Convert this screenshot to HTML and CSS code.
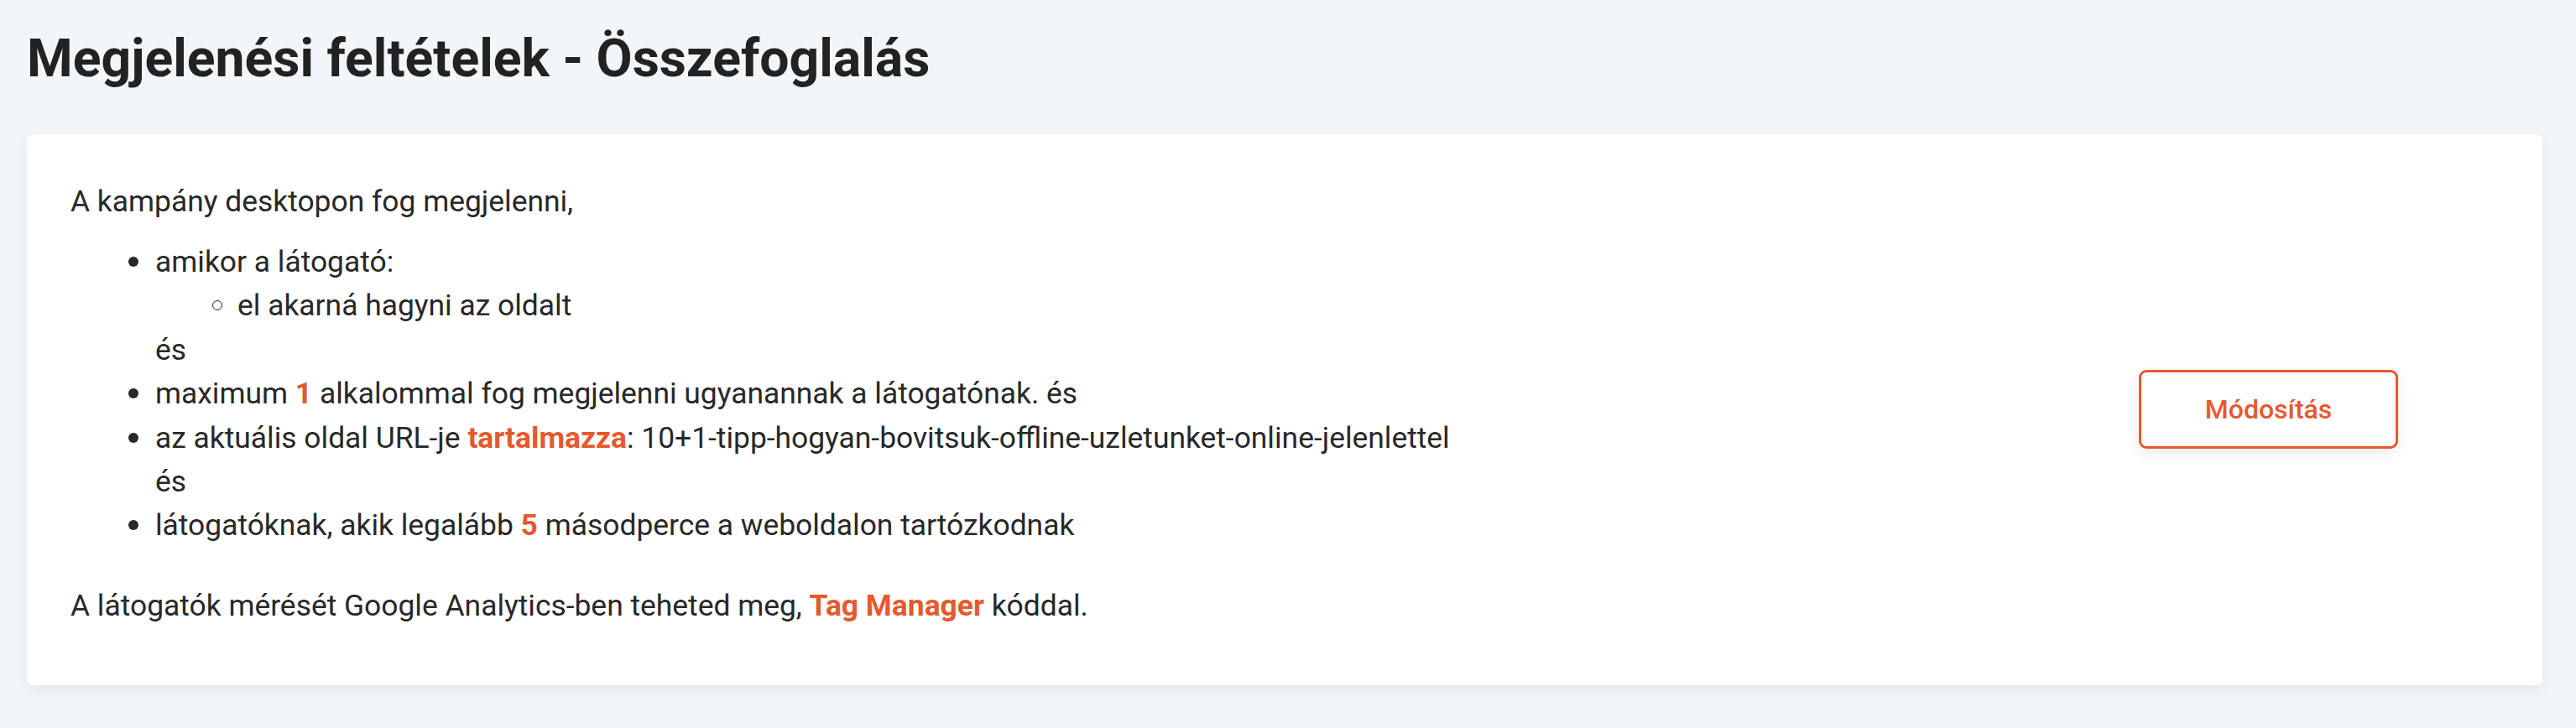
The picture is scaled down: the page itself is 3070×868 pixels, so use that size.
FILE: index.html
```html
<!DOCTYPE html>
<html lang="hu">
<head>
<meta charset="utf-8">
<title>Megjelenési feltételek - Összefoglalás</title>
<link rel="stylesheet" href="styles.css">
</head>
<body>
<div class="page">
  <h1 class="title">Megjelenési feltételek - Összefoglalás</h1>
  <section class="card">
    <div class="summary">
      <p class="lead">A kampány desktopon fog megjelenni,</p>
      <ul class="conditions">
        <li>amikor a látogató:
          <ul class="sub">
            <li>el akarná hagyni az oldalt</li>
          </ul>
          <div class="and">és</div>
        </li>
        <li>maximum <strong class="hl">1</strong> alkalommal fog megjelenni ugyanannak a látogatónak. és</li>
        <li>az aktuális oldal URL-je <strong class="hl">tartalmazza</strong>: 10+1-tipp-hogyan-bovitsuk-offline-uzletunket-online-jelenlettel
          <div class="and">és</div>
        </li>
        <li>látogatóknak, akik legalább <strong class="hl">5</strong> másodperce a weboldalon tartózkodnak</li>
      </ul>
      <p class="note">A látogatók mérését Google Analytics-ben teheted meg, <strong class="hl">Tag Manager</strong> kóddal.</p>
    </div>
    <button class="edit-btn" type="button">Módosítás</button>
  </section>
</div>
</body>
</html>
```

FILE: styles.css
```css
html, body {
  margin: 0;
  padding: 0;
  background: #f3f6f9;
}

body {
  font-family: Roboto, "Liberation Sans", Arial, sans-serif;
  color: #282828;
}

.page {
  padding: 32px 40px 40px 32px;
}

.title {
  margin: 0 0 53px 0;
  font-size: 62.5px;
  font-weight: 700;
  line-height: 75px;
  color: #222222;
}

.card {
  display: flex;
  align-items: center;
  background: #ffffff;
  border-radius: 8px;
  box-shadow: 0 5px 16px rgba(30, 45, 70, 0.07);
  padding: 54px 52px 54px 52px;
}

.summary {
  flex: 1;
  font-size: 35.4px;
  line-height: 52.4px;
}

.lead {
  margin: 0;
}

.note {
  margin: 0 0 14px 0;
}

.conditions {
  margin: 19.6px 0 43.6px 0;
  padding-left: 101px;
  list-style: none;
}

.conditions > li::before {
  content: "";
  display: inline-block;
  width: 12px;
  height: 12px;
  margin: 0 20px 0 -32px;
  border-radius: 50%;
  background: #282828;
  vertical-align: 6px;
}

.sub {
  margin: 0;
  padding-left: 98px;
  list-style: none;
}

.sub > li::before {
  content: "";
  display: inline-block;
  box-sizing: border-box;
  width: 12px;
  height: 12px;
  margin: 0 18px 0 -30px;
  border-radius: 50%;
  border: 1.5px solid #282828;
  vertical-align: 6px;
}

.hl {
  color: #e45a2e;
  font-weight: 700;
}

.edit-btn {
  flex: none;
  width: 309px;
  height: 94px;
  margin-right: 120px;
  background: #ffffff;
  border: 3px solid #e45a2e;
  border-radius: 9px;
  color: #e45a2e;
  font-family: Roboto, "Liberation Sans", Arial, sans-serif;
  font-size: 32px;
  font-weight: 500;
  box-shadow: 0 6px 18px rgba(30, 40, 60, 0.09);
  cursor: pointer;
}
```
